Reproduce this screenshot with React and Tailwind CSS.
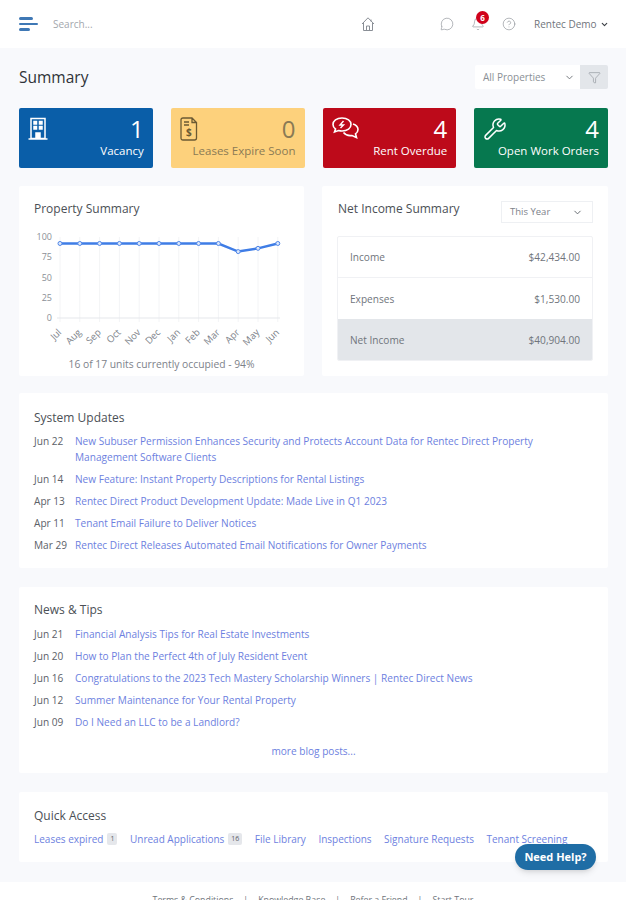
import { Bell, ChevronDown, CircleHelp, Filter, MessageCircle, Wrench } from "lucide-react";

const months = ["Jul", "Aug", "Sep", "Oct", "Nov", "Dec", "Jan", "Feb", "Mar", "Apr", "May", "Jun"];
const values = [92, 92, 92, 92, 92, 92, 92, 92, 92, 82, 86, 92];

const systemUpdates = [
  ["Jun 22", "New Subuser Permission Enhances Security and Protects Account Data for Rentec Direct Property Management Software Clients"],
  ["Jun 14", "New Feature: Instant Property Descriptions for Rental Listings"],
  ["Apr 13", "Rentec Direct Product Development Update: Made Live in Q1 2023"],
  ["Apr 11", "Tenant Email Failure to Deliver Notices"],
  ["Mar 29", "Rentec Direct Releases Automated Email Notifications for Owner Payments"],
];

const newsTips = [
  ["Jun 21", "Financial Analysis Tips for Real Estate Investments"],
  ["Jun 20", "How to Plan the Perfect 4th of July Resident Event"],
  ["Jun 16", "Congratulations to the 2023 Tech Mastery Scholarship Winners | Rentec Direct News"],
  ["Jun 12", "Summer Maintenance for Your Rental Property"],
  ["Jun 09", "Do I Need an LLC to be a Landlord?"],
];

function HomeIcon() {
  return (
    <svg width="16" height="16" viewBox="0 0 16 16" fill="none" stroke="#8a8f96" strokeWidth="1" className="shrink-0">
      <path d="M2 8 L8 1.8 L14 8 M3.5 7 V14.5 H12.5 V7 M6.5 14.5 V10 H9.5 V14.5 M11 3.5 V5.5" />
    </svg>
  );
}

function BuildingIcon() {
  return (
    <svg width="20" height="24" viewBox="0 0 20 24" fill="none" stroke="white" strokeWidth="1.5">
      <path d="M3 1.5 H17 V21.5 H3 Z M0.5 22 H19.5" />
      <path d="M6 4.5 H8.5 V7 H6 Z M11.5 4.5 H14 V7 H11.5 Z M6 9.5 H8.5 V12 H6 Z M11.5 9.5 H14 V12 H11.5 Z M8 21.5 V16 H12 V21.5" fill="white" />
    </svg>
  );
}

function LeaseIcon() {
  return (
    <svg width="18" height="24" viewBox="0 0 18 24" fill="none" stroke="#6b5a33" strokeWidth="1.3">
      <path d="M3 1 H12 L16.5 5.5 V21 Q16.5 23 14.5 23 H3 Q1 23 1 21 V3 Q1 1 3 1 Z M12 1 V5.5 H16.5 M4 5 H9 M4 8 H9" />
      <text x="8.8" y="19" fontSize="10" textAnchor="middle" fill="#6b5a33" stroke="none" fontFamily="Open Sans, sans-serif" fontWeight="700">$</text>
    </svg>
  );
}

function RentIcon() {
  return (
    <svg width="27" height="23" viewBox="0 0 27 23" fill="none" stroke="white" strokeWidth="1.6">
      <path d="M10 1 C4.5 1 1 4 1 7.5 C1 9.5 2 11 3.5 12 L2.5 15 L6.5 13.5 C7.5 13.8 8.7 14 10 14 C15.5 14 19 11 19 7.5 C19 4 15.5 1 10 1 Z" />
      <path d="M21 7 C24 8 26 10 26 12.5 C26 14.5 25 15.8 23.5 16.8 L24.5 20.5 L20 18.5 C17 19 13.5 18 11.5 15.5" />
      <path d="M11.5 4 L8 8 H11.5 L8.5 11" strokeWidth="1.4" />
    </svg>
  );
}

function StatCard({ icon, value, label, className, textClassName }) {
  return (
    <div className={`flex h-[60px] flex-col rounded-[2px] px-[9px] pt-2 ${className}`}>
      <div className="flex h-[26px] justify-between">
        <div className="mt-[1px]">{icon}</div>
        <span className={`text-[24px] leading-[26px] font-medium ${textClassName}`}>{value}</span>
      </div>
      <span className={`mt-[1px] text-right text-[11.5px] leading-[16px] font-medium whitespace-nowrap ${textClassName}`}>{label}</span>
    </div>
  );
}

function PropertyChart() {
  const xAt = (i) => 60 + i * 19.8;
  const yAt = (v) => 81 - v * 0.81;
  const points = values.map((v, i) => `${xAt(i)},${yAt(v)}`).join(" ");

  return (
    <svg width="285" height="126" viewBox="19 0 285 126" className="block overflow-visible">
      {months.map((month, i) => (
        <line key={month} x1={xAt(i)} x2={xAt(i)} y1="0" y2="85" stroke="#f3f4f6" strokeWidth="1" />
      ))}
      <line x1="57" x2="280" y1="81" y2="81" stroke="#e5e7eb" />
      {[100, 75, 50, 25, 0].map((tick) => (
        <text key={tick} x="52" y={yAt(tick) + 3} textAnchor="end" fontSize="9" fill="#8a8f96" fontFamily="Open Sans, sans-serif">
          {tick}
        </text>
      ))}
      <polyline points={points} fill="none" stroke="#3f7de6" strokeWidth="2.5" />
      {values.map((v, i) => (
        <circle key={months[i]} cx={xAt(i)} cy={yAt(v)} r="2" fill="#dbe7fb" stroke="#4f86e8" strokeWidth="1" />
      ))}
      {months.map((month, i) => (
        <text
          key={month}
          x={xAt(i) + 2}
          y="96"
          textAnchor="end"
          fontSize="9.5"
          fill="#7d828a"
          fontFamily="Open Sans, sans-serif"
          transform={`rotate(-45 ${xAt(i) + 2} 96)`}
        >
          {month}
        </text>
      ))}
    </svg>
  );
}

function IncomeRow({ label, amount, className }) {
  return (
    <div className={`flex h-[41px] items-center justify-between px-3 pt-[2px] text-[10.1px] text-[#70757c] ${className}`}>
      <span>{label}</span>
      <span>{amount}</span>
    </div>
  );
}

function NewsPanel({ title, items, footer, className, listClassName }) {
  return (
    <section className={`rounded-[2px] bg-white px-[15px] ${className}`}>
      <h2 className="text-[12px] leading-[17px] text-[#4b5056]">{title}</h2>
      <ul className={`flex flex-col gap-[6px] ${listClassName}`}>
        {items.map(([date, text]) => (
          <li className="flex text-[10.1px] leading-[16px]" key={text}>
            <span className="w-[41px] shrink-0 text-[#5c6168]">{date}</span>
            <a className="text-[#6d7fe0]" href="#">
              {text}
            </a>
          </li>
        ))}
      </ul>
      {footer}
    </section>
  );
}

function QuickLink({ label, count }) {
  return (
    <a className="flex items-center gap-[4px] whitespace-nowrap text-[#6d7fe0]" href="#">
      {label}
      {count ? <span className="rounded-[2px] bg-[#e5e7eb] px-[3px] text-[7px] leading-[12px] text-[#5c6168]">{count}</span> : null}
    </a>
  );
}

export default function App() {
  return (
    <div className="relative h-[900px] overflow-hidden bg-[#f8f9fc] font-['Open_Sans',sans-serif]">
      <header className="flex h-12 items-center bg-white pr-[18px] pl-[19px]">
        <div className="flex w-[19px] shrink-0 flex-col gap-[3px]">
          <span className="h-[2.5px] w-[14px] rounded-full bg-[#3f78b5]" />
          <span className="h-[2.5px] w-[19px] rounded-full bg-[#3f78b5]" />
          <span className="h-[2.5px] w-[11px] rounded-full bg-[#3f78b5]" />
        </div>
        <span className="ml-[15px] w-[307px] shrink-0 text-[10px] text-[#a3a7ad]">Search...</span>
        <HomeIcon />
        <MessageCircle className="ml-[64px] h-[14px] w-[14px] shrink-0 text-[#80858c]" strokeWidth={1} />
        <div className="relative ml-[17px] shrink-0">
          <Bell className="h-[14px] w-[14px] text-[#80858c]" strokeWidth={1} />
          <span className="absolute -top-[6px] left-[5px] flex h-[13px] w-[13px] items-center justify-center rounded-full bg-[#d0021b] text-[8px] leading-none font-bold text-white">
            6
          </span>
        </div>
        <CircleHelp className="ml-[17px] h-[14px] w-[14px] shrink-0 text-[#80858c]" strokeWidth={1} />
        <span className="ml-[18px] text-[10px] whitespace-nowrap text-[#70757c]">Rentec Demo</span>
        <ChevronDown className="ml-[3px] h-[9px] w-[9px] shrink-0 text-[#3b3f45]" strokeWidth={3} />
      </header>

      <main className="pr-[18px] pl-[19px]">
        <div className="flex items-center justify-between pt-[17px]">
          <h1 className="text-[15.5px] leading-[24px] text-[#2f3338]">Summary</h1>
          <div className="flex h-[24px]">
            <div className="flex w-[105px] items-center justify-between rounded-l-[2px] bg-white pr-[5px] pl-[8px] text-[10px] text-[#8a8f96]">
              All Properties
              <ChevronDown className="h-[11px] w-[11px] text-[#6b7075]" strokeWidth={2} />
            </div>
            <div className="flex w-[28px] items-center justify-center rounded-r-[2px] bg-[#e3e6ea]">
              <Filter className="h-[13px] w-[13px] text-[#7d828a]" strokeWidth={1} />
            </div>
          </div>
        </div>

        <div className="mt-[19px] grid grid-cols-4 gap-[18px]">
          <StatCard className="bg-[#0a5ea8]" textClassName="text-white" icon={<BuildingIcon />} value="1" label="Vacancy" />
          <StatCard className="bg-[#fdd17c]" textClassName="text-[#8a7a55]" icon={<LeaseIcon />} value="0" label="Leases Expire Soon" />
          <StatCard className="bg-[#bd0a1a]" textClassName="text-white" icon={<RentIcon />} value="4" label="Rent Overdue" />
          <StatCard className="bg-[#06784f]" textClassName="text-white" icon={<Wrench className="h-[24px] w-[24px] text-white" strokeWidth={1.5} />} value="4" label="Open Work Orders" />
        </div>

        <div className="mt-[18px] flex h-[190px] gap-[18px]">
          <section className="w-[285px] rounded-[2px] bg-white pt-[14px]">
            <h2 className="pl-[15px] text-[12px] leading-[17px] text-[#4b5056]">Property Summary</h2>
            <div className="mt-[20px]">
              <PropertyChart />
            </div>
            <p className="mt-[-6px] text-center text-[10.3px] leading-[14px] text-[#7d828a]">16 of 17 units currently occupied - 94%</p>
          </section>

          <section className="flex-1 rounded-[2px] bg-white px-[15px] pt-[14px]">
            <div className="flex items-start justify-between">
              <h2 className="pl-[1px] text-[12px] leading-[17px] text-[#4b5056]">Net Income Summary</h2>
              <div className="mt-[1px] flex h-[22px] w-[92px] items-center justify-between border border-[#eef0f3] pr-[9px] pl-[8px] text-[9.5px] text-[#7d828a]">
                This Year
                <ChevronDown className="h-[11px] w-[11px] text-[#5c6168]" strokeWidth={2} />
              </div>
            </div>
            <div className="mt-[13px] overflow-hidden rounded-[2px] border border-[#f0f1f4]">
              <IncomeRow label="Income" amount="$42,434.00" className="border-b border-[#f0f1f4]" />
              <IncomeRow label="Expenses" amount="$1,530.00" />
              <IncomeRow label="Net Income" amount="$40,904.00" className="bg-[#e3e6ea]" />
            </div>
          </section>
        </div>

        <NewsPanel title="System Updates" items={systemUpdates} className="mt-[17px] h-[175px] pt-[16px]" listClassName="mt-[7px]" />
        <NewsPanel
          title="News & Tips"
          items={newsTips}
          className="mt-[19px] h-[186px] pt-[14px]"
          listClassName="mt-[8px]"
          footer={
            <p className="mt-[13px] text-center text-[10.1px] leading-[16px] text-[#6d7fe0]">more blog posts...</p>
          }
        />

        <section className="mt-[19px] h-[70px] rounded-[2px] bg-white px-[15px] pt-[15px]">
          <h2 className="text-[12px] leading-[17px] text-[#4b5056]">Quick Access</h2>
          <div className="mt-[8px] flex gap-[12.5px] text-[10px] leading-[14px]">
            <QuickLink label="Leases expired" count="1" />
            <QuickLink label="Unread Applications" count="16" />
            <QuickLink label="File Library" />
            <QuickLink label="Inspections" />
            <QuickLink label="Signature Requests" />
            <QuickLink label="Tenant Screening" />
          </div>
        </section>
      </main>

      <footer className="mt-[20px] flex h-[40px] justify-center gap-[10px] bg-white pt-[12px] text-[8.8px] leading-[12px] text-[#70757c]">
        <span>Terms &amp; Conditions</span>
        <span>|</span>
        <span>Knowledge Base</span>
        <span>|</span>
        <span>Refer a Friend</span>
        <span>|</span>
        <span>Start Tour</span>
      </footer>

      <button
        className="absolute top-[844px] left-[515px] h-[26px] w-[81px] rounded-full bg-[#1f6da5] text-[11px] font-bold text-white shadow-md"
        type="button"
      >
        Need Help?
      </button>
    </div>
  );
}
